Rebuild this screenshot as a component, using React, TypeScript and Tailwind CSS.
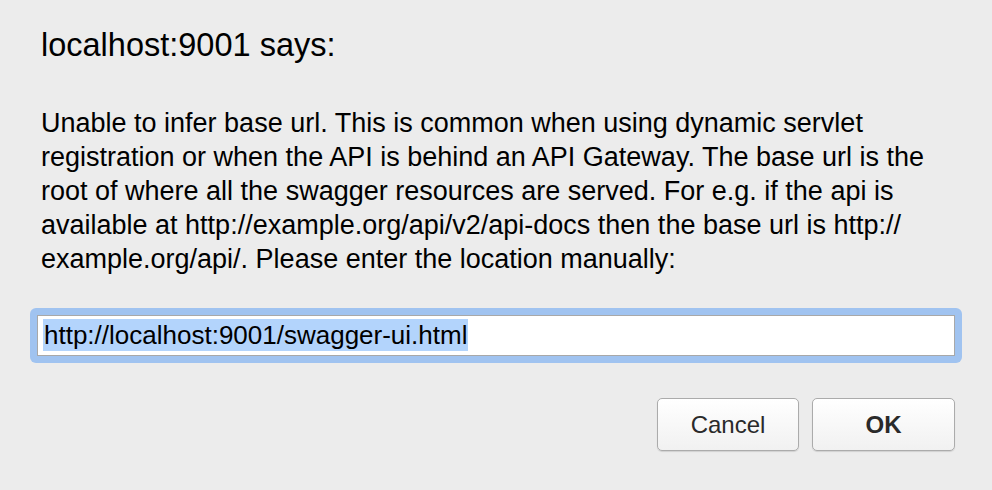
export default function App() {
  return (
    <div
      className="w-[992px] h-[490px] bg-[#ececec] px-[30px] text-black"
      style={{ fontFamily: '"Liberation Sans", Arial, sans-serif' }}
    >
      {/* Title */}
      <div className="pt-[26px] pl-[11px] text-[32.5px] leading-[38px]">localhost:9001 says:</div>

      {/* Message */}
      <p className="mt-[42px] pl-[11px] text-[27px] leading-[34px] whitespace-nowrap">
        Unable to infer base url. This is common when using dynamic servlet
        <br />
        registration or when the API is behind an API Gateway. The base url is the
        <br />
        root of where all the swagger resources are served. For e.g. if the api is
        <br />
        available at http://example.org/api/v2/api-docs then the base url is http://
        <br />
        example.org/api/. Please enter the location manually:
      </p>

      {/* Input with focus ring */}
      <div className="mt-[32px] rounded-[6px] bg-[#a0c3f0] p-[7px]">
        <div className="h-[41px] border border-[#a8a8a8] bg-white pl-[5px] pt-[3px]">
          <span className="inline-block bg-[#b3d4fc] px-[1px] text-[26px] leading-[32px]">
            http://localhost:9001/swagger-ui.html
          </span>
        </div>
      </div>

      {/* Buttons */}
      <div className="mt-[35px] flex justify-end gap-[13px] pr-[7px]">
        <button className="h-[53px] w-[142px] rounded-[5px] border border-[#ababab] bg-gradient-to-b from-white to-[#f1f1f1] text-[24px] text-[#2a2a2a] shadow-[0_1px_1px_rgba(0,0,0,0.12)]">
          Cancel
        </button>
        <button className="h-[53px] w-[143px] rounded-[5px] border border-[#ababab] bg-gradient-to-b from-white to-[#f1f1f1] text-[24px] font-bold text-[#2a2a2a] shadow-[0_1px_1px_rgba(0,0,0,0.12)]">
          OK
        </button>
      </div>
    </div>
  )
}
